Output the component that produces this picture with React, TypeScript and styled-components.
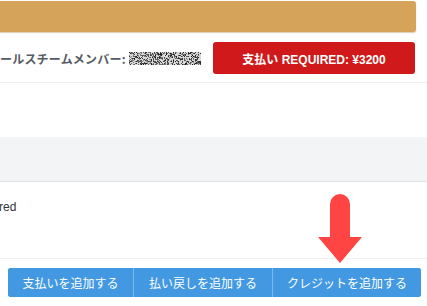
import React from "react";
import styled, { createGlobalStyle } from "styled-components";

const Global = createGlobalStyle`
  html, body { margin: 0; padding: 0; background: #fff; }
  body { font-family: "Liberation Sans", "Noto Sans CJK JP", sans-serif; overflow: hidden; }
`;

const Page = styled.div`
  position: relative;
  width: 427px;
  height: 306px;
  overflow: hidden;
  padding-top: 1px;
  box-sizing: border-box;
`;

const Banner = styled.div`
  width: 416px;
  height: 31px;
  background: #d6a35a;
  border-radius: 0 3px 3px 0;
  box-shadow: 0 1px 1px rgba(160, 110, 40, 0.35);
`;

const MemberRow = styled.div`
  display: flex;
  align-items: center;
  justify-content: space-between;
  height: 32px;
  margin-top: 10px;
  padding: 0 12px 8px 0;
  border-bottom: 1px solid #efefef;
`;

const MemberLabel = styled.div`
  display: flex;
  align-items: center;
  gap: 3px;
  font-family: "Noto Sans CJK JP", sans-serif;
  font-weight: 700;
  font-size: 12px;
  letter-spacing: 0.2px;
  color: #555b63;
  white-space: nowrap;
`;

const RequiredButton = styled.button`
  width: 202px;
  height: 32px;
  border: none;
  border-radius: 3px;
  background: #d0191a;
  color: #fff;
  font-family: "Liberation Sans", "Noto Sans CJK JP", sans-serif;
  font-weight: 700;
  font-size: 12px;
  display: flex;
  align-items: center;
  justify-content: center;
  padding: 0;
`;

const Spacer = styled.div<{ h: number }>`
  height: ${(p) => p.h}px;
`;

const GrayBand = styled.div`
  height: 44px;
  background: #f3f4f6;
  border-bottom: 1px solid #dde3e3;
`;

const NoteText = styled.div`
  margin-top: 18px;
  height: 14px;
  line-height: 14px;
  font-family: "Liberation Sans", sans-serif;
  font-size: 12px;
  color: #333;
  margin-left: -1px;
`;

const Footer = styled.div`
  margin-top: 44px;
  border-top: 1px solid #f1f1f1;
  padding: 9px 0 0 8px;
`;

const ButtonGroup = styled.div`
  display: flex;
  width: 413px;
  height: 29px;
  border-radius: 3px;
  overflow: hidden;
  background: #4299e1;
`;

const GroupButton = styled.button<{ w: number }>`
  width: ${(p) => p.w}px;
  height: 29px;
  border: none;
  background: #4299e1;
  color: #fff;
  font-family: "Noto Sans CJK JP", sans-serif;
  font-size: 12px;
  padding: 0;
  & + & { border-left: 1px solid #7cb9ec; }
`;

const Arrow = styled.svg`
  position: absolute;
  left: 317px;
  top: 194px;
`;

function Noise() {
  const cells: React.ReactNode[] = [];
  let seed = 7;
  const rnd = () => {
    seed = (seed * 1103515245 + 12345) & 0x7fffffff;
    return seed / 0x7fffffff;
  };
  for (let y = 0; y < 13; y++) {
    for (let x = 0; x < 72; x++) {
      const v = rnd();
      if (v > 0.5) {
        const g = Math.floor(20 + rnd() * 120);
        cells.push(
          <rect key={`${x}-${y}`} x={x} y={y} width={1} height={1} fill={`rgb(${g},${g},${g})`} />
        );
      }
    }
  }
  return (
    <svg width="72" height="13" viewBox="0 0 72 13">
      <rect width="72" height="13" fill="#d8d8d8" />
      {cells}
    </svg>
  );
}

export default function App() {
  return (
    <>
      <Global />
      <Page>
        <Banner />
        <MemberRow>
          <MemberLabel>
            <span>ールスチームメンバー:</span>
            <Noise />
          </MemberLabel>
          <RequiredButton>支払い REQUIRED: ¥3200</RequiredButton>
        </MemberRow>
        <Spacer h={54} />
        <GrayBand />
        <NoteText>red</NoteText>
        <Footer>
          <ButtonGroup>
            <GroupButton w={125}>支払いを追加する</GroupButton>
            <GroupButton w={139}>払い戻しを追加する</GroupButton>
            <GroupButton w={149}>クレジットを追加する</GroupButton>
          </ButtonGroup>
        </Footer>
        <Arrow width="46" height="70" viewBox="0 0 46 70">
          <path d="M13 10 a10 10 0 0 1 20 0 V43 H45 L23 69 L1 43 H13 Z" fill="#ff4444" />
        </Arrow>
      </Page>
    </>
  );
}
